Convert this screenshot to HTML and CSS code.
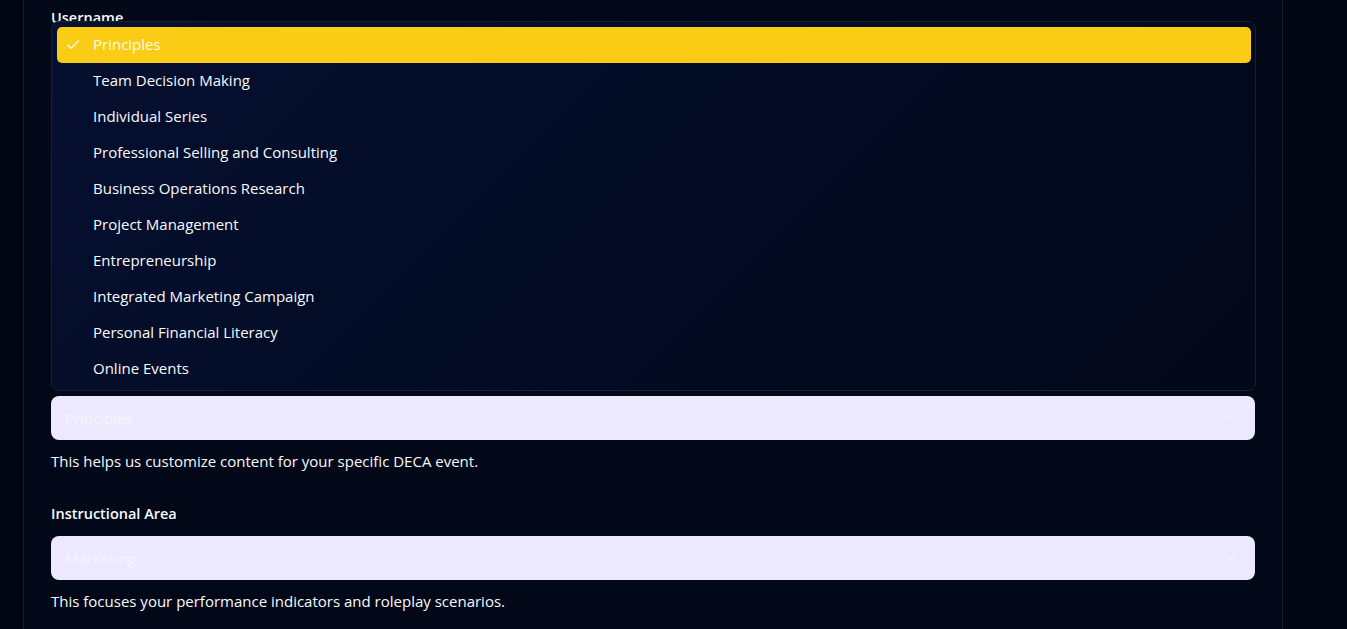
FILE: index.html
```html
<!DOCTYPE html>
<html lang="en">
<head>
<meta charset="utf-8">
<title>Profile</title>
<link rel="stylesheet" href="styles.css">
</head>
<body>
<main class="page">
  <section class="card">
    <form class="form">
      <div class="field">
        <label class="label">Username</label>
        <div class="input"></div>
        <div class="input textarea"></div>
      </div>
      <div class="field">
        <div class="select-wrap">
          <div class="popover">
            <div class="item selected">
              <svg class="check" viewBox="0 0 24 24" width="16" height="16" fill="none" stroke="currentColor" stroke-width="2" stroke-linecap="round" stroke-linejoin="round"><path d="M20 6 9 17l-5-5"/></svg>
              <span>Principles</span>
            </div>
            <div class="item"><span>Team Decision Making</span></div>
            <div class="item"><span>Individual Series</span></div>
            <div class="item"><span>Professional Selling and Consulting</span></div>
            <div class="item"><span>Business Operations Research</span></div>
            <div class="item"><span>Project Management</span></div>
            <div class="item"><span>Entrepreneurship</span></div>
            <div class="item"><span>Integrated Marketing Campaign</span></div>
            <div class="item"><span>Personal Financial Literacy</span></div>
            <div class="item"><span>Online Events</span></div>
          </div>
          <div class="select" aria-label="DECA Event">
            <span class="value">Principles</span>
            <svg class="chev" viewBox="0 0 24 24" width="16" height="16" fill="none" stroke="currentColor" stroke-width="2" stroke-linecap="round" stroke-linejoin="round"><path d="m6 9 6 6 6-6"/></svg>
          </div>
        </div>
        <p class="help">This helps us customize content for your specific DECA event.</p>
      </div>
      <div class="field">
        <label class="label">Instructional Area</label>
        <div class="select">
          <span class="value">Marketing</span>
          <svg class="chev" viewBox="0 0 24 24" width="16" height="16" fill="none" stroke="currentColor" stroke-width="2" stroke-linecap="round" stroke-linejoin="round"><path d="m6 9 6 6 6-6"/></svg>
        </div>
        <p class="help">This focuses your performance indicators and roleplay scenarios.</p>
      </div>
    </form>
  </section>
</main>
</body>
</html>
```
FILE: styles.css
```css
* { box-sizing: border-box; }
html, body {
  margin: 0;
  padding: 0;
  background: #020612;
  color: #f8fafc;
  font-family: "Open Sans", "Noto Sans", sans-serif;
  font-size: 15px;
  line-height: 20px;
  overflow: hidden;
}
.page {
  padding-left: 23px;
}
.card {
  width: 1260px;
  margin-top: -21px;
  border: 1px solid #161e2e;
  border-radius: 12px;
  background: #020817;
  padding: 28px 27px 160px 27px;
}
.form {
  display: flex;
  flex-direction: column;
  gap: 32px;
}
.field {
  display: flex;
  flex-direction: column;
  gap: 12px;
}
.label {
  display: block;
  height: 20px;
  font-size: 14.5px;
  font-weight: 600;
  line-height: 20px;
}
.help {
  margin: 0;
  height: 20px;
  line-height: 18px;
}
.input {
  height: 44px;
  border-radius: 8px;
  background: #ece9fe;
}
.textarea {
  height: 268px;
}
.select-wrap {
  position: relative;
}
.select {
  height: 44px;
  border-radius: 8px;
  background: #ece9fe;
  display: flex;
  align-items: center;
  justify-content: space-between;
  padding: 0 16px 0 14px;
}
.value {
  color: #f6f4ff;
}
.chev {
  color: #f8fafc;
  opacity: 0.6;
}
.popover {
  position: absolute;
  left: 0;
  right: -1px;
  bottom: calc(100% + 5px);
  z-index: 10;
  border: 1px solid #172036;
  border-radius: 8px;
  background: linear-gradient(135deg, #061030 0%, #030c26 40%, #020818 100%);
  padding: 5px 4px 3px 5px;
  display: flex;
  flex-direction: column;
}
.item {
  position: relative;
  height: 36px;
  display: flex;
  align-items: center;
  padding-left: 36px;
  padding-bottom: 2px;
  border-radius: 5px;
  color: #f8fafc;
}
.item.selected {
  background: #facc15;
  color: #fffbe6;
}
.check {
  position: absolute;
  left: 8px;
  top: 50%;
  transform: translateY(-50%);
}
```
